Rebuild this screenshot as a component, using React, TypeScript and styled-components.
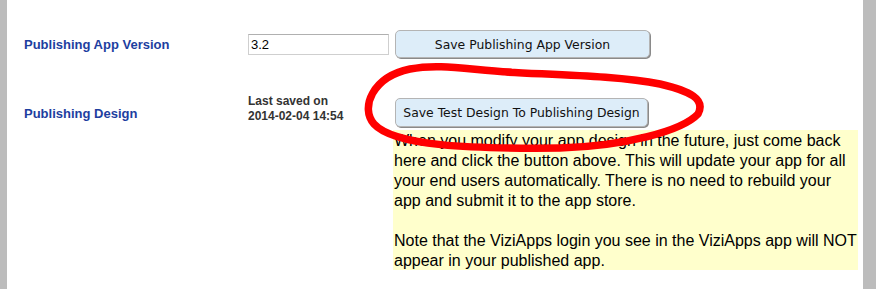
import styled, { createGlobalStyle } from 'styled-components';

const GlobalStyle = createGlobalStyle`
  html, body {
    margin: 0;
    padding: 0;
    background: #ffffff;
  }
  body {
    font-family: 'Liberation Sans', Arial, sans-serif;
  }
`;

const Page = styled.div`
  display: flex;
  width: 876px;
  height: 289px;
  overflow: hidden;
`;

const SideBar = styled.div<{ $width: number }>`
  flex: 0 0 ${({ $width }) => $width}px;
  background: #bcbcbc;
`;

const Main = styled.div`
  position: relative;
  flex: 1 1 auto;
  padding: 30px 0 0 17px;
`;

// row 2 is 69px tall: a 40px gap above the 29px design row
const Form = styled.div`
  display: grid;
  grid-template-columns: 224px 145px 465px;
  grid-template-rows: 28px 69px auto;
`;

const Label = styled.div<{ $row: number }>`
  grid-column: 1;
  grid-row: ${({ $row }) => $row};
  align-self: ${({ $row }) => ($row === 2 ? 'end' : 'center')};
  margin-bottom: ${({ $row }) => ($row === 2 ? '6px' : '0')};
  color: #1d3e9f;
  font-weight: bold;
  font-size: 13px;
`;

const VersionInput = styled.input`
  grid-column: 2;
  grid-row: 1;
  align-self: center;
  box-sizing: border-box;
  width: 141px;
  height: 21px;
  margin: 1px 0 0 0;
  padding: 1px 2px;
  border: 1px solid #cfcfcf;
  border-top-color: #b0b0b0;
  font-family: 'Liberation Sans', Arial, sans-serif;
  font-size: 13px;
  color: #000;
  outline: none;
`;

const SavedInfo = styled.div`
  grid-column: 2;
  grid-row: 2;
  align-self: end;
  margin-bottom: 3px;
  color: #333;
  font-size: 12px;
  font-weight: bold;
  line-height: 15px;
`;

const ActionButton = styled.button<{ $row: number; $width: number }>`
  grid-column: 3;
  grid-row: ${({ $row }) => $row};
  align-self: end;
  justify-self: start;
  margin-left: 2px;
  box-sizing: border-box;
  width: ${({ $width }) => $width}px;
  height: ${({ $row }) => ($row === 2 ? 29 : 28)}px;
  padding: 0 4px;
  background: #ddedf9;
  border: 1px solid #b4b4b4;
  border-radius: 5px;
  box-shadow: 1px 1px 0 #8a8a8a;
  font-family: 'DejaVu Sans', Verdana, sans-serif;
  font-size: 12.4px;
  color: #111;
  white-space: nowrap;
  cursor: pointer;
`;

const Note = styled.div`
  grid-column: 3;
  grid-row: 3;
  margin-top: 3px;
  height: 140px;
  box-sizing: border-box;
  padding: 1px 0 0 1px;
  background: #ffffcc;
  color: #000;
  font-size: 16px;
  line-height: 20px;

  p {
    margin: 0 0 20px;
  }
`;

const Scribble = styled.svg`
  position: absolute;
  left: -7px;
  top: 0;
  pointer-events: none;
`;

export default function App() {
  return (
    <>
      <GlobalStyle />
      <Page>
        <SideBar $width={7} />
        <Main>
          <Form>
            <Label $row={1}>Publishing App Version</Label>
            <VersionInput defaultValue="3.2" />
            <ActionButton $row={1} $width={255}>
              Save Publishing App Version
            </ActionButton>

            <Label $row={2}>Publishing Design</Label>
            <SavedInfo>
              Last saved on
              <br />
              2014-02-04 14:54
            </SavedInfo>
            <ActionButton $row={2} $width={253}>
              Save Test Design To Publishing Design
            </ActionButton>

            <Note>
              <p>
                When you modify your app design in the future, just come back
                here and click the button above. This will update your app for
                all your end users automatically. There is no need to rebuild
                your app and submit it to the app store.
              </p>
              <p>
                Note that the ViziApps login you see in the ViziApps app will
                NOT appear in your published app.
              </p>
            </Note>
          </Form>
          <Scribble width="876" height="289" viewBox="0 0 876 289">
            <path
              d="M 510 72 C 470 70 440 63 410 69 C 372 77 360 108 374 124 C 394 146 470 149 560 148 C 625 146 682 131 698 114 C 706 99 690 91 660 84 C 620 76 560 75 505 72"
              fill="none"
              stroke="#ff0000"
              strokeWidth="7.5"
              strokeLinecap="round"
              strokeLinejoin="round"
            />
          </Scribble>
        </Main>
        <SideBar $width={13} />
      </Page>
    </>
  );
}
